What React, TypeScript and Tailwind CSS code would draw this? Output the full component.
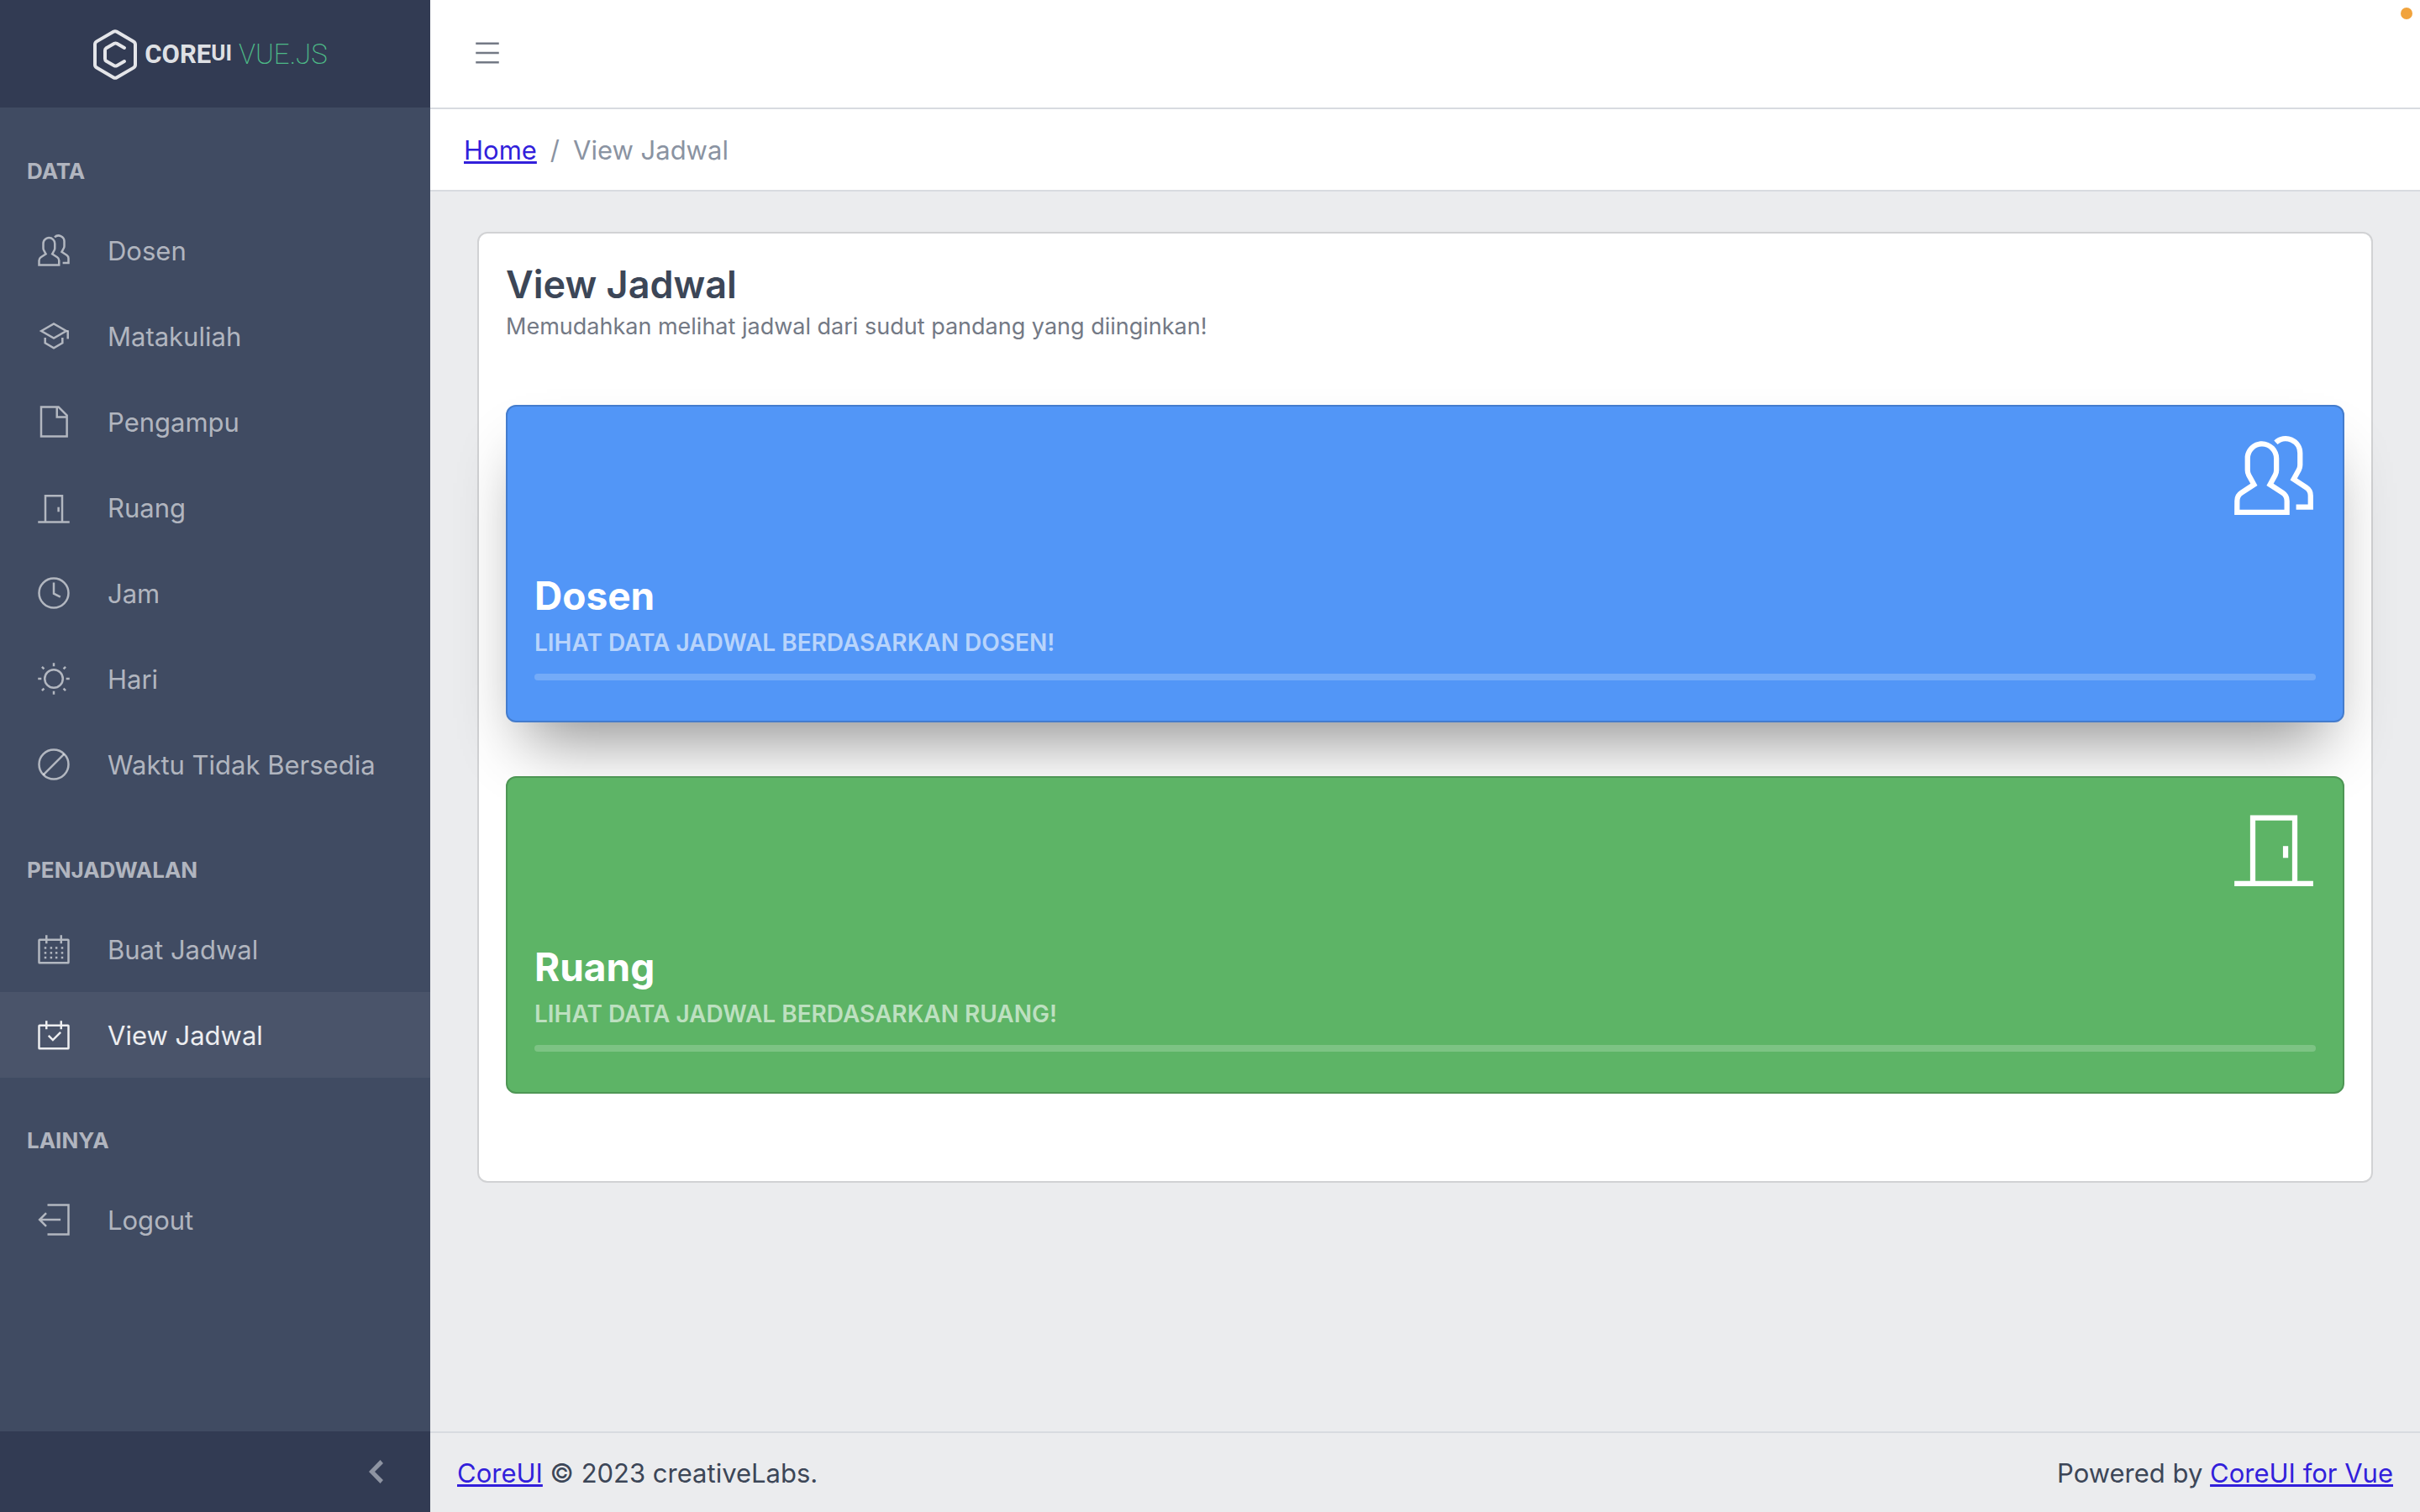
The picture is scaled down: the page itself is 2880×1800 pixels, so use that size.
import type { ReactNode } from 'react';

type IconProps = { className?: string };

function Icon({ className = 'size-10', children }: IconProps & { children: ReactNode }) {
  return (
    <svg viewBox="0 0 512 512" className={className} fill="currentColor" fillRule="evenodd" aria-hidden="true">
      {children}
    </svg>
  );
}

function People({ className }: IconProps) {
  return (
    <Icon className={className}>
      <path d="M462.541,316.3l-64.344-42.1,24.774-45.418A79.124,79.124,0,0,0,432.093,192V120A103.941,103.941,0,0,0,257.484,43.523L279.232,67a71.989,71.989,0,0,1,120.861,53v72a46.809,46.809,0,0,1-5.215,21.452L355.962,284.8l89.058,58.274a42.16,42.16,0,0,1,19.073,35.421V432h-72v32h104V378.494A74.061,74.061,0,0,0,462.541,316.3Z" />
      <path d="M318.541,348.3l-64.343-42.1,24.773-45.418A79.124,79.124,0,0,0,288.093,224V152A104.212,104.212,0,0,0,184.04,47.866C126.723,47.866,80.093,94.581,80.093,152v72a78,78,0,0,0,9.015,36.775l24.908,45.664L50.047,348.3A74.022,74.022,0,0,0,16.5,410.4L16,496H352.093V410.494A74.061,74.061,0,0,0,318.541,348.3ZM320.093,464H48.186l.31-53.506a42.158,42.158,0,0,1,19.073-35.421l88.682-58.029L117.2,245.452A46.838,46.838,0,0,1,112.093,224V152a72,72,0,1,1,144,0v72a46.809,46.809,0,0,1-5.215,21.452L211.962,316.8l89.058,58.274a42.16,42.16,0,0,1,19.073,35.421Z" />
    </Icon>
  );
}

function Education() {
  return (
    <Icon>
      <g fill="none" stroke="currentColor" strokeWidth="32">
        <path d="M66 179L256 70L446 179L256 288Z" />
        <path d="M470 170V300" />
        <path d="M124 280V362L256 438L388 362V280" />
      </g>
    </Icon>
  );
}

function File() {
  return (
    <Icon>
      <path d="M334.627,16H48V496H472V153.373ZM440,166.627V168H320V48h1.373ZM80,464V48H288V200H440V464Z" />
    </Icon>
  );
}

function Door({ className }: IconProps) {
  return (
    <Icon className={className}>
      <path d="M400,464V64H112V464H16v32H496V464ZM144,96H368V464H144Z" />
      <rect x="312" y="252" width="32" height="72" />
    </Icon>
  );
}

function Clock() {
  return (
    <Icon>
      <g fill="none" stroke="currentColor" strokeWidth="32">
        <circle cx="256" cy="256" r="224" />
        <path d="M256 96V264L356 314" />
      </g>
    </Icon>
  );
}

function Sun() {
  return (
    <Icon>
      <g fill="none" stroke="currentColor" strokeWidth="32">
        <circle cx="256" cy="256" r="138" />
        <path d="M256 16V68M256 444V496M16 256H68M444 256H496M76 76L108 108M404 404L436 436M76 436L108 404M404 108L436 76" />
      </g>
    </Icon>
  );
}

function Ban() {
  return (
    <Icon>
      <g fill="none" stroke="currentColor" strokeWidth="32">
        <circle cx="256" cy="256" r="224" />
        <path d="M98 414L414 98" />
      </g>
    </Icon>
  );
}

const calendarFrame =
  'M472,96H384V40H352V96H160V40H128V96H40a24.028,24.028,0,0,0-24,24V456a24.028,24.028,0,0,0,24,24H472a24.028,24.028,0,0,0,24-24V120A24.028,24.028,0,0,0,472,96Zm-8,352H48V128h80v40h32V128H352v40h32V128h80Z';

function Calendar() {
  return (
    <Icon>
      <path d={calendarFrame} />
      {[220, 296, 368].map((y) =>
        [112, 200, 280, 368].map((x) => <rect key={`${x}-${y}`} x={x} y={y} width="32" height="32" />),
      )}
    </Icon>
  );
}

function CalendarCheck() {
  return (
    <Icon>
      <path d={calendarFrame} />
      <path d="M176 268L242 334L360 216" fill="none" stroke="currentColor" strokeWidth="32" />
    </Icon>
  );
}

function Exit() {
  return (
    <Icon>
      <g fill="none" stroke="currentColor" strokeWidth="32">
        <path d="M160 32H480V480H160" />
        <path d="M40 256H360M141 155L40 256L141 357" />
      </g>
    </Icon>
  );
}

function NavTitle({ children }: { children: ReactNode }) {
  return <h2 className="px-8 pt-14 pb-6 text-[26px] leading-[38px] font-bold text-white/60">{children}</h2>;
}

function NavItem({ icon, label, active = false }: { icon: ReactNode; label: string; active?: boolean }) {
  return (
    <li>
      <a
        href="#"
        aria-current={active ? 'page' : undefined}
        className={
          active
            ? 'flex h-[102px] items-center bg-white/5 text-white/90'
            : 'flex h-[102px] items-center text-white/60'
        }
      >
        <span className="flex w-32 shrink-0 justify-center">{icon}</span>
        <span className="pt-px whitespace-nowrap">{label}</span>
      </a>
    </li>
  );
}

function Brand() {
  return (
    <a href="#" aria-label="CoreUI Vue.js" className="flex h-32 items-center justify-center gap-2 bg-[#323b53] pt-0.5 pr-3 text-white/87">
      <svg viewBox="0 0 54 60" className="h-15 w-[54px]" fill="none" stroke="currentColor" aria-hidden="true">
        <path
          d="M25 2.8Q27 1.6 29 2.8L49 14.4Q51 15.6 51 18V42Q51 44.4 49 45.6L29 57.2Q27 58.4 25 57.2L5 45.6Q3 44.4 3 42V18Q3 15.6 5 14.4Z"
          strokeWidth="4"
        />
        <path
          d="M38 22L29 16.8Q27.500 16 26 16.800L16.500 22.200Q15 23.200 15 25V35Q15 36.800 16.500 37.800L26 43.200Q27.500 44 29 43.200L38 38"
          strokeWidth="4"
          strokeLinecap="round"
        />
      </svg>
      <span className="flex items-start font-['Roboto',sans-serif] font-bold">
        <span className="text-[31px] leading-10">CORE</span>
        <span className="text-[26px] leading-9">UI</span>
        <span className="pl-2 text-[33px] leading-10 font-extralight text-[#4dba87]">VUE.JS</span>
      </span>
    </a>
  );
}

function Widget({ title, text, icon, className }: { title: string; text: string; icon: ReactNode; className: string }) {
  return (
    <a href="#" className={`block rounded-xl border-2 p-8 text-white ${className}`}>
      <div className="flex justify-end">{icon}</div>
      <h2 className="mt-16 text-[46px] leading-[58px] font-bold">{title}</h2>
      <p className="mt-1.5 text-[28px] leading-[42px] font-semibold text-white/60 uppercase">{text}</p>
      <div className="mt-4 mb-4 h-2 rounded-full bg-white/20" />
    </a>
  );
}

const link = 'text-[#321fdb] underline decoration-[3px] underline-offset-2';

export default function App() {
  return (
    <div className="flex min-h-screen bg-[#ebecee] font-['Inter',sans-serif] text-[31px] leading-[48px] text-[#3c4657]">
      <aside className="flex w-[512px] shrink-0 flex-col bg-[#404b62]">
        <Brand />
        <nav className="flex-1 pt-px">
          <NavTitle>DATA</NavTitle>
          <ul>
            <NavItem icon={<People />} label="Dosen" />
            <NavItem icon={<Education />} label="Matakuliah" />
            <NavItem icon={<File />} label="Pengampu" />
            <NavItem icon={<Door />} label="Ruang" />
            <NavItem icon={<Clock />} label="Jam" />
            <NavItem icon={<Sun />} label="Hari" />
            <NavItem icon={<Ban />} label="Waktu Tidak Bersedia" />
          </ul>
          <NavTitle>PENJADWALAN</NavTitle>
          <ul>
            <NavItem icon={<Calendar />} label="Buat Jadwal" />
            <NavItem icon={<CalendarCheck />} label="View Jadwal" active />
          </ul>
          <NavTitle>LAINYA</NavTitle>
          <ul>
            <NavItem icon={<Exit />} label="Logout" />
          </ul>
        </nav>
        <button type="button" aria-label="Collapse sidebar" className="flex h-24 items-center justify-end bg-[#323b53] pr-[54px] text-[#8e94a2]">
          <svg viewBox="0 0 20 28" className="h-7 w-5" fill="currentColor" aria-hidden="true">
            <path d="M14.500 0L18 4L8 14L18 24L14.500 28L1 14Z" />
          </svg>
        </button>
      </aside>

      <div className="flex min-w-0 flex-1 flex-col">
        <header className="relative flex h-[130px] items-center border-b-2 border-[#d8dbe0] bg-white px-12 pb-0.5">
          <button type="button" aria-label="Toggle sidebar" className="text-[#737985]">
            <Icon>
              <rect x="80" y="96" width="352" height="32" />
              <rect x="80" y="240" width="352" height="32" />
              <rect x="80" y="384" width="352" height="32" />
            </Icon>
          </button>
          <span className="absolute top-[9px] right-[9px] size-3.5 rounded-full bg-[#f1a33c]" />
        </header>

        <nav aria-label="Breadcrumb" className="border-b-2 border-[#d8dbe0] bg-white px-10 pt-[25px] pb-[23px]">
          <ol className="flex gap-4 text-[#8a93a2]">
            <li>
              <a href="#" className={link}>
                Home
              </a>
            </li>
            <li aria-hidden="true">/</li>
            <li aria-current="page">View Jadwal</li>
          </ol>
        </nav>

        <main className="flex-1 px-14 py-12">
          <section className="rounded-xl border-2 border-[#d1d2d4] bg-white px-8 pt-8 pb-[104px]">
            <h1 className="text-[45px] leading-[58px] font-semibold">View Jadwal</h1>
            <p className="text-[27px] leading-[42px] text-[#737985]">
              Memudahkan melihat jadwal dari sudut pandang yang diinginkan!
            </p>
            <div className="mt-18 flex flex-col gap-16">
              <Widget
                title="Dosen"
                text="Lihat data jadwal berdasarkan dosen!"
                icon={<People className="size-25" />}
                className="border-[#447ccd] bg-[#5296f7] shadow-[0_44px_72px_-24px_rgba(0,0,0,0.44)]"
              />
              <Widget
                title="Ruang"
                text="Lihat data jadwal berdasarkan ruang!"
                icon={<Door className="size-25" />}
                className="border-[#4e9655] bg-[#5db466]"
              />
            </div>
          </section>
        </main>

        <footer className="flex h-24 items-center justify-between border-t-2 border-[#d8dbe0] px-8 pt-0.5">
          <p>
            <a href="#" className={link}>
              CoreUI
            </a>{' '}
            © 2023 creativeLabs.
          </p>
          <p>
            Powered by{' '}
            <a href="#" className={link}>
              CoreUI for Vue
            </a>
          </p>
        </footer>
      </div>
    </div>
  );
}
